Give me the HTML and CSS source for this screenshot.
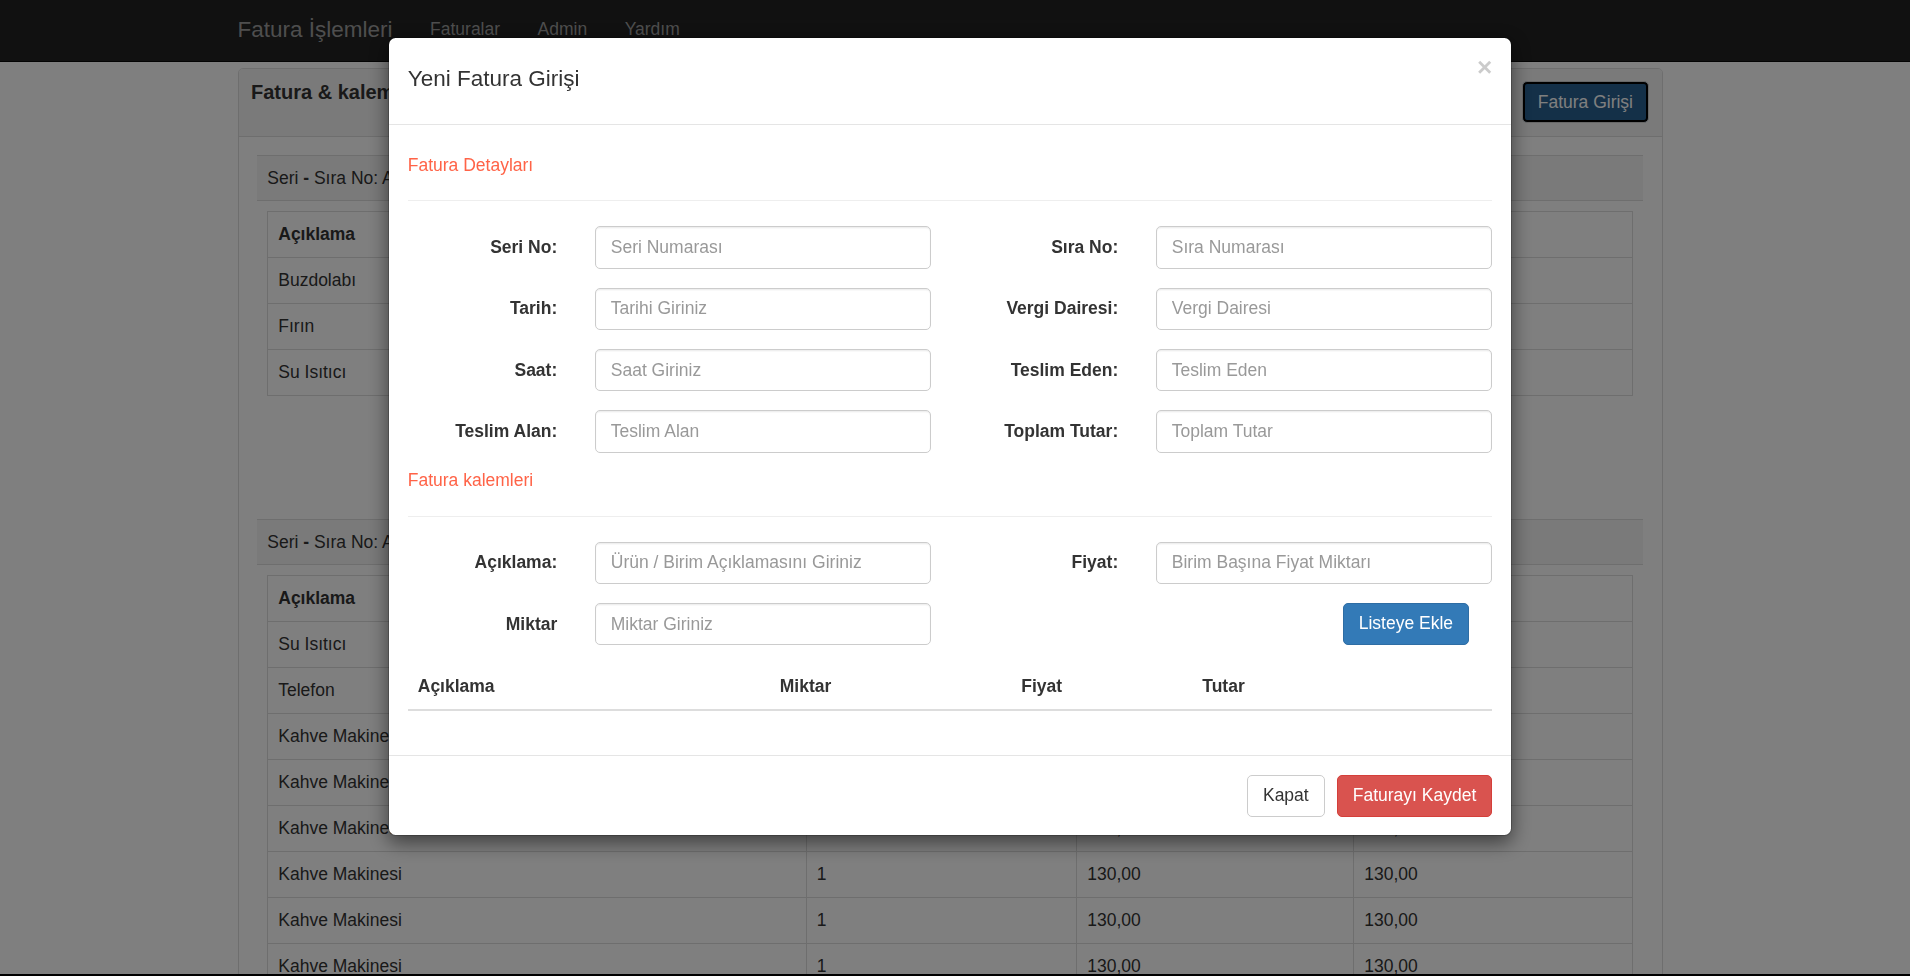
FILE: index.html
```html
<!DOCTYPE html>
<html lang="tr">
<head>
<meta charset="utf-8">
<title>Fatura İşlemleri</title>
<link rel="stylesheet" href="styles.css">
</head>
<body>
<div class="page">
  <nav class="navbar">
    <div class="container nav-inner">
      <a class="brand" href="#">Fatura İşlemleri</a>
      <ul class="nav-links">
        <li><a href="#">Faturalar</a></li>
        <li><a href="#">Admin</a></li>
        <li><a href="#">Yardım</a></li>
      </ul>
    </div>
  </nav>
  <main class="container">
    <section class="panel">
      <div class="panel-heading">
        <h3 class="panel-title">Fatura &amp; kalemleri</h3>
        <button class="btn btn-primary btn-focused" type="button">Fatura Girişi</button>
      </div>
      <div class="panel-body">
        <div class="inv-block">
          <div class="inv-head">Seri <b>-</b> Sıra No: A <b>-</b> 1001</div>
          <div class="inv-body">
            <table class="bg-table">
              <colgroup><col class="c1"><col class="c2"><col class="c3"><col></colgroup>
              <thead><tr><th>Açıklama</th><th>Miktar</th><th>Fiyat</th><th>Tutar</th></tr></thead>
              <tbody>
                <tr><td>Buzdolabı</td><td>1</td><td>2.450,00</td><td>2.450,00</td></tr>
                <tr><td>Fırın</td><td>1</td><td>1.200,00</td><td>1.200,00</td></tr>
                <tr><td>Su Isıtıcı</td><td>2</td><td>150,00</td><td>300,00</td></tr>
              </tbody>
            </table>
          </div>
        </div>
        <div class="inv-block">
          <div class="inv-head">Seri <b>-</b> Sıra No: A <b>-</b> 1002</div>
          <div class="inv-body">
            <table class="bg-table">
              <colgroup><col class="c1"><col class="c2"><col class="c3"><col></colgroup>
              <thead><tr><th>Açıklama</th><th>Miktar</th><th>Fiyat</th><th>Tutar</th></tr></thead>
              <tbody>
                <tr><td>Su Isıtıcı</td><td>1</td><td>150,00</td><td>150,00</td></tr>
                <tr><td>Telefon</td><td>1</td><td>3.500,00</td><td>3.500,00</td></tr>
                <tr><td>Kahve Makinesi</td><td>1</td><td>130,00</td><td>130,00</td></tr>
                <tr><td>Kahve Makinesi</td><td>1</td><td>130,00</td><td>130,00</td></tr>
                <tr><td>Kahve Makinesi</td><td>1</td><td>130,00</td><td>130,00</td></tr>
                <tr><td>Kahve Makinesi</td><td>1</td><td>130,00</td><td>130,00</td></tr>
                <tr><td>Kahve Makinesi</td><td>1</td><td>130,00</td><td>130,00</td></tr>
                <tr><td>Kahve Makinesi</td><td>1</td><td>130,00</td><td>130,00</td></tr>
                <tr><td>Kahve Makinesi</td><td>1</td><td>130,00</td><td>130,00</td></tr>
              </tbody>
            </table>
          </div>
        </div>
      </div>
    </section>
  </main>
</div>

<div class="backdrop"></div>

<div class="modal">
  <div class="modal-dialog">
    <div class="modal-content">
      <div class="modal-header">
        <h4 class="modal-title">Yeni Fatura Girişi</h4>
        <button class="close" type="button">&times;</button>
      </div>
      <div class="modal-body">
        <h5 class="section-title">Fatura Detayları</h5>
        <hr class="divider">
        <div class="form-group">
          <label class="form-label">Seri No:</label>
          <div class="form-field"><input class="form-control" placeholder="Seri Numarası"></div>
          <label class="form-label">Sıra No:</label>
          <div class="form-field"><input class="form-control" placeholder="Sıra Numarası"></div>
        </div>
        <div class="form-group">
          <label class="form-label">Tarih:</label>
          <div class="form-field"><input class="form-control" placeholder="Tarihi Giriniz"></div>
          <label class="form-label">Vergi Dairesi:</label>
          <div class="form-field"><input class="form-control" placeholder="Vergi Dairesi"></div>
        </div>
        <div class="form-group">
          <label class="form-label">Saat:</label>
          <div class="form-field"><input class="form-control" placeholder="Saat Giriniz"></div>
          <label class="form-label">Teslim Eden:</label>
          <div class="form-field"><input class="form-control" placeholder="Teslim Eden"></div>
        </div>
        <div class="form-group">
          <label class="form-label">Teslim Alan:</label>
          <div class="form-field"><input class="form-control" placeholder="Teslim Alan"></div>
          <label class="form-label">Toplam Tutar:</label>
          <div class="form-field"><input class="form-control" placeholder="Toplam Tutar"></div>
        </div>

        <h5 class="section-title">Fatura kalemleri</h5>
        <hr class="divider">
        <div class="form-group">
          <label class="form-label">Açıklama:</label>
          <div class="form-field"><input class="form-control" placeholder="Ürün / Birim Açıklamasını Giriniz"></div>
          <label class="form-label">Fiyat:</label>
          <div class="form-field"><input class="form-control" placeholder="Birim Başına Fiyat Miktarı"></div>
        </div>
        <div class="form-group">
          <label class="form-label">Miktar</label>
          <div class="form-field"><input class="form-control" placeholder="Miktar Giriniz"></div>
          <div class="btn-cell"><button class="btn btn-primary" type="button">Listeye Ekle</button></div>
        </div>

        <table class="items-table">
          <colgroup><col class="i1"><col class="i2"><col class="i3"><col></colgroup>
          <thead><tr><th>Açıklama</th><th>Miktar</th><th>Fiyat</th><th>Tutar</th></tr></thead>
          <tbody></tbody>
        </table>
      </div>
      <div class="modal-footer">
        <button class="btn btn-default" type="button">Kapat</button>
        <button class="btn btn-danger" type="button">Faturayı Kaydet</button>
      </div>
    </div>
  </div>
</div>

<div class="screen-edge"></div>
</body>
</html>
```

FILE: styles.css
```css
*, *::before, *::after { box-sizing: border-box; }

html, body {
  margin: 0;
  height: 100%;
  overflow: hidden;
}

body {
  font-family: "Liberation Sans", Arial, Helvetica, sans-serif;
  font-size: 17.5px;
  line-height: 1.428571;
  color: #333;
  background: #fff;
}

/* page content is centred as if a 10px scrollbar gutter sat on the right */
.page {
  padding-right: 10px;
}

/* ---------- navbar ---------- */
.navbar {
  height: 62px;
  margin-right: -10px;
  padding-right: 10px;
  background: #222;
  border-bottom: 1px solid #080808;
}

.container {
  width: 1462.5px;
  margin: 0 auto;
  padding: 0 18.75px;
}

.nav-inner {
  display: flex;
  align-items: flex-start;
}

.brand {
  margin-left: -18.75px;
  padding: 16.5px 18.75px;
  font-size: 22.5px;
  line-height: 25px;
  color: #9d9d9d;
  text-decoration: none;
}

.nav-links {
  display: flex;
  list-style: none;
  margin: 0;
  padding: 0;
}

.nav-links a {
  display: block;
  padding: 16.5px 18.75px;
  line-height: 25px;
  color: #9d9d9d;
  text-decoration: none;
}

/* ---------- panel ---------- */
.panel {
  margin-top: 5.5px;
  background: #fff;
  border: 1px solid #ddd;
  border-radius: 5px;
}

.panel-heading {
  display: flex;
  justify-content: space-between;
  align-items: flex-start;
  padding: 12.5px;
  background: #f5f5f5;
  border-bottom: 1px solid #ddd;
  border-radius: 4px 4px 0 0;
}

.panel-title {
  margin: 0;
  font-size: 20px;
  line-height: 22px;
  font-weight: bold;
  color: #333;
}

.panel-body {
  padding: 18.75px;
}

.inv-block {
  margin-bottom: 88px;
}

.inv-head {
  padding: 9.5px 10px;
  line-height: 25px;
  background: #f5f5f5;
  border-top: 1px solid #ddd;
  border-bottom: 1px solid #ddd;
}

.inv-body {
  padding: 10px;
}

.bg-table {
  width: 100%;
  table-layout: fixed;
  border-collapse: collapse;
  border: 1px solid #ddd;
  margin-bottom: 25px;
}

.bg-table .c1 { width: 538.5px; }
.bg-table .c2 { width: 270.5px; }
.bg-table .c3 { width: 277px; }

.bg-table th,
.bg-table td {
  padding: 10px;
  line-height: 25px;
  text-align: left;
  border: 1px solid #ddd;
  white-space: nowrap;
  overflow: hidden;
}

.bg-table th { font-weight: bold; }

/* ---------- buttons ---------- */
.btn {
  display: inline-block;
  margin: 0;
  padding: 7.5px 15px;
  font-family: inherit;
  font-size: 17.5px;
  line-height: 25px;
  font-weight: normal;
  white-space: nowrap;
  border: 1px solid transparent;
  border-radius: 5px;
  cursor: pointer;
}

.btn-primary {
  color: #fff;
  background: #337ab7;
  border-color: #2e6da4;
}

.btn-focused {
  background: #286090;
  border-color: #d0d0d0;
  box-shadow: inset 0 0 0 2px #000;
}

.btn-default {
  color: #333;
  background: #fff;
  border-color: #ccc;
}

.btn-danger {
  color: #fff;
  background: #d9534f;
  border-color: #d43f3a;
}

/* ---------- modal ---------- */
.backdrop {
  position: fixed;
  inset: 0;
  z-index: 10;
  background: #000;
  opacity: 0.5;
}

.modal {
  position: fixed;
  inset: 0;
  z-index: 20;
  padding-right: 10px;
  overflow: hidden;
}

.modal-dialog {
  width: 1124px;
  margin: 37px auto 0;
}

.modal-content {
  background: #fff;
  background-clip: padding-box;
  border: 1px solid rgba(0, 0, 0, 0.2);
  border-radius: 7.5px;
  box-shadow: 0 6.25px 18.75px rgba(0, 0, 0, 0.5);
}

.modal-header {
  display: flex;
  align-items: flex-start;
  padding: 18.75px;
  border-bottom: 1px solid #e5e5e5;
}

.modal-title {
  flex: 1;
  margin: 6.5px 0 9.75px;
  font-size: 22.5px;
  font-weight: normal;
  line-height: 32.14px;
}

.close {
  margin-top: -3px;
  padding: 0;
  font-family: inherit;
  font-size: 26.25px;
  font-weight: bold;
  line-height: 1;
  color: #000;
  text-shadow: 0 1.25px 0 #fff;
  opacity: 0.2;
  background: transparent;
  border: 0;
  cursor: pointer;
}

.modal-body {
  padding: 18.75px;
}

.section-title {
  margin: 12.5px 0;
  font-size: 17.5px;
  line-height: 1.1;
  font-weight: normal;
  color: #ff6347;
}

.divider {
  height: 0;
  margin: 25px 0;
  border: 0;
  border-top: 1px solid #eee;
}

.form-group {
  display: grid;
  grid-template-columns: repeat(12, minmax(0, 1fr));
  margin: 0 -18.75px 18.75px;
}

.form-group > * {
  padding: 0 18.75px;
}

.form-label {
  grid-column: span 2;
  padding-top: 8.75px;
  line-height: 25px;
  text-align: right;
  font-weight: bold;
}

.form-field {
  grid-column: span 4;
}

.btn-cell {
  grid-column: 11 / span 2;
}

.form-control {
  display: block;
  width: 100%;
  height: 42.5px;
  padding: 7.5px 15px;
  font-family: inherit;
  font-size: 17.5px;
  line-height: 25px;
  color: #555;
  background: #fff;
  border: 1px solid #ccc;
  border-radius: 5px;
  box-shadow: inset 0 1.25px 1.25px rgba(0, 0, 0, 0.075);
}

.form-control::placeholder {
  color: #999;
  opacity: 1;
}

.items-table {
  width: 100%;
  border-collapse: collapse;
  margin-bottom: 25px;
}

.items-table .i1 { width: 362px; }
.items-table .i2 { width: 241.5px; }
.items-table .i3 { width: 181px; }

.items-table th {
  padding: 10px;
  line-height: 25px;
  text-align: left;
  font-weight: bold;
  border-bottom: 2px solid #ddd;
}

.modal-footer {
  display: flex;
  justify-content: flex-end;
  gap: 12px;
  padding: 18.75px;
  border-top: 1px solid #e5e5e5;
}

.screen-edge {
  position: fixed;
  left: 0;
  right: 0;
  bottom: 0;
  height: 2px;
  z-index: 30;
  background: #000;
}
```
